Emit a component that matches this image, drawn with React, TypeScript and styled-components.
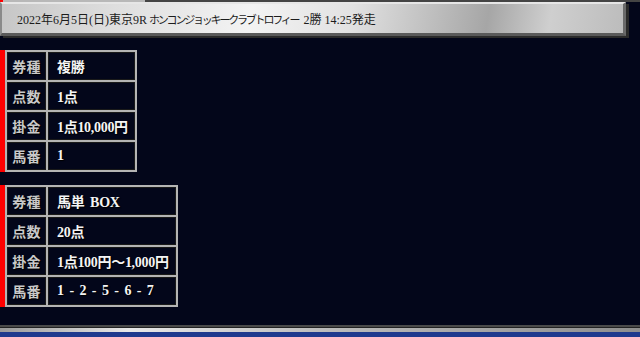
import styled, { createGlobalStyle } from "styled-components"

const GlobalStyle = createGlobalStyle`
    html, body {
        margin: 0;
        padding: 0;
        background: #03061a;
    }
    body {
        font-family: "Liberation Serif", "Noto Sans CJK JP", serif;
    }
`

const Page = styled.div`
    height: 337px;
    display: flex;
    flex-direction: column;
    overflow: hidden;
`

const TopStrip = styled.div`
    height: 2px;
    background: linear-gradient(90deg, #ff0000 0, #ff0000 3px, #b8b8b8 3px, #b8b8b8 145px, #444 145px, #444 100%);
`

const Header = styled.div`
    width: 626px;
    height: 34px;
    display: flex;
    align-items: center;
    padding-left: 15px;
    box-sizing: border-box;
    border-top: 2px solid #e6e6e6;
    border-left: 2px solid #8a8a8a;
    border-right: 3px solid #6a6a6a;
    border-bottom: 3px solid #5a5a5a;
    box-shadow: 3px 2px 0 #2a2a2a;
    background: linear-gradient(100deg, #c6c6c6 0%, #dedede 18%, #f3f3f3 40%, #e2e2e2 56%, #a6a6a6 78%, #cfcfcf 88%, #bcbcbc 100%);
    font-size: 12px;
    color: #1c1c1c;
    white-space: pre;
`

const Kana = styled.span`
    font-size: 11px;
    letter-spacing: -2.2px;
    margin: 0 5px 0 2px;
`

const Content = styled.div`
    display: flex;
    flex-direction: column;
    gap: 13px;
    padding-top: 14px;
`

const Block = styled.div`
    display: flex;
    border-left: 5px solid #ff0000;
`

const Table = styled.table<{ $width: number }>`
    width: ${p => p.$width}px;
    border-collapse: collapse;
    border: 1px solid #3a3a3a;
`

const Cell = styled.td<{ $label?: boolean }>`
    height: 28px;
    padding: 0 0 0 ${p => (p.$label ? 0 : 9)}px;
    width: ${p => (p.$label ? "39px" : "auto")};
    text-align: ${p => (p.$label ? "center" : "left")};
    border: 2px solid #b4b4b4;
    box-shadow: inset 0 0 0 1px #1a1a1a;
    color: ${p => (p.$label ? "#c9c9c9" : "#f4f4f4")};
    font-weight: bold;
    font-size: 14px;
    letter-spacing: ${p => (p.$label ? "0.3px" : "-0.3px")};
    word-spacing: 2.5px;
    text-shadow: 1px 1px 1px #000;
    white-space: pre;
`

const Footer = styled.div`
    margin-top: auto;
    display: flex;
    flex-direction: column;
`

const FooterDark = styled.div`
    height: 2px;
    background: #4a4a4a;
`

const FooterSilver = styled.div`
    height: 4px;
    background: linear-gradient(90deg, #9a9a9a 0%, #e8e8e8 20%, #bdbdbd 50%, #8e8e8e 100%);
    border-top: 1px solid #222;
`

const FooterBlue = styled.div`
    height: 5px;
    background: #1f3a8e;
`

type Row = { label: string; value: string }

const bets: { width: number; rows: Row[] }[] = [
    {
        width: 132,
        rows: [
            { label: "券種", value: "複勝" },
            { label: "点数", value: "1点" },
            { label: "掛金", value: "1点10,000円" },
            { label: "馬番", value: "1" },
        ],
    },
    {
        width: 173,
        rows: [
            { label: "券種", value: "馬単 BOX" },
            { label: "点数", value: "20点" },
            { label: "掛金", value: "1点100円～1,000円" },
            { label: "馬番", value: "1 - 2 - 5 - 6 - 7" },
        ],
    },
]

const App = () => {
    return (
        <>
            <GlobalStyle />
            <Page>
                <TopStrip />
                <Header>
                    2022年6月5日(日)東京9R<Kana>ホンコンジョッキークラブトロフィー</Kana>2勝 14:25発走
                </Header>
                <Content>
                    {bets.map((bet, i) => (
                        <Block key={i}>
                            <Table $width={bet.width}>
                                <tbody>
                                    {bet.rows.map(row => (
                                        <tr key={row.label}>
                                            <Cell $label>{row.label}</Cell>
                                            <Cell>{row.value}</Cell>
                                        </tr>
                                    ))}
                                </tbody>
                            </Table>
                        </Block>
                    ))}
                </Content>
                <Footer>
                    <FooterDark />
                    <FooterSilver />
                    <FooterBlue />
                </Footer>
            </Page>
        </>
    )
}

export default App
